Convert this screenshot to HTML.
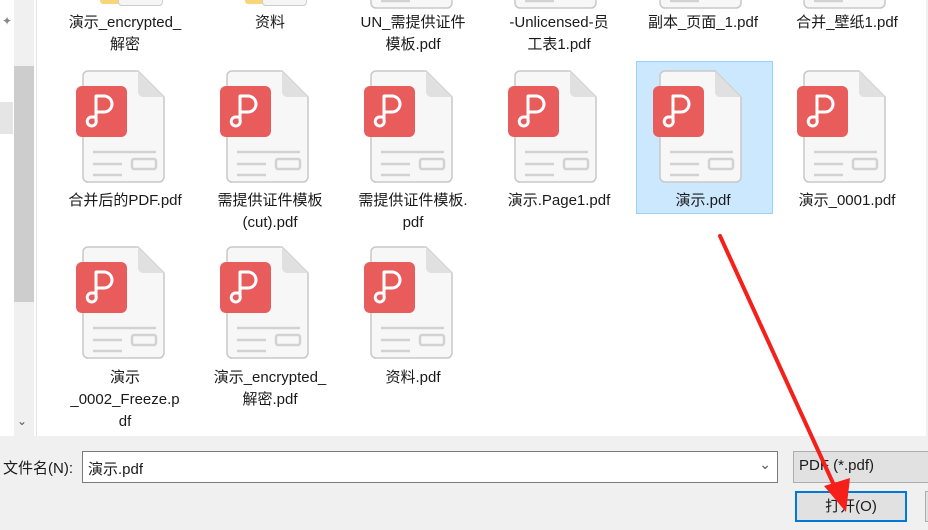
<!DOCTYPE html>
<html><head><meta charset="utf-8"><style>
*{margin:0;padding:0;box-sizing:border-box}
body{width:928px;height:530px;overflow:hidden;background:#f0f0f0;font-family:"Liberation Sans","Noto Sans CJK SC",sans-serif;font-size:15px;color:#1a1a1a;position:relative}
.area{position:absolute;left:36px;top:0;width:890px;height:436px;background:#fff;border-left:1px solid #e5e5e5}
.side{position:absolute;left:0;top:0;width:36px;height:436px;background:#fff}
.track{position:absolute;left:14px;top:0;width:20px;height:436px;background:#f0f0f0}
.thumb{position:absolute;left:14px;top:66px;width:20px;height:236px;background:#cdcdcd}
.lbl{position:absolute;width:136px;text-align:center;line-height:22px;font-size:15px}
.ic{position:absolute;width:100px;height:120px}
.sel{position:absolute;left:636px;top:61px;width:137px;height:153px;background:#cce8ff;border:1px solid #99d1ff}
.inp{position:absolute;left:82px;top:451px;width:696px;height:32px;background:#fff;border:1px solid #7a7a7a}
.flt{position:absolute;left:793px;top:451px;width:140px;height:32px;background:#e1e1e1;border:1px solid #adadad}
.btn{position:absolute;left:795px;top:491px;width:112px;height:31px;background:#e1e1e1;border:2px solid #0078d7;text-align:center;line-height:27px}
.btn2{position:absolute;left:925px;top:491px;width:10px;height:31px;background:#e1e1e1;border:1px solid #adadad}
</style></head><body>
<svg width="0" height="0" style="position:absolute"><defs>
<g id="pdf">
<path d="M12 1 H62 L88 27 V107 a5 5 0 0 1 -5 5 H12 a5 5 0 0 1 -5 -5 V6 a5 5 0 0 1 5 -5z" fill="#f7f7f7" stroke="#c8c8c8" stroke-width="1.5"/>
<path d="M62 1 V22 a5 5 0 0 0 5 5 H88z" fill="#e0e0e0"/>
<line x1="17" y1="82" x2="80" y2="82" stroke="#d2d2d2" stroke-width="2.5"/>
<line x1="17" y1="94" x2="46" y2="94" stroke="#d2d2d2" stroke-width="2.5"/>
<rect x="56" y="89" width="24" height="10" rx="2" fill="none" stroke="#d2d2d2" stroke-width="2.5"/>
<line x1="17" y1="105" x2="46" y2="105" stroke="#d2d2d2" stroke-width="2.5"/>
<rect x="0" y="16" width="51" height="51" rx="6" fill="#e95c5c"/>
<path d="M20 26 H28 A8 8 0 0 1 28 42 H20 V50 A4.5 4.5 0 1 1 15 47 H20 M20 26 V43" fill="none" stroke="#fff" stroke-width="3" stroke-linecap="round" stroke-linejoin="round"/>
</g></defs></svg>
<div class="side"></div>
<div class="area"></div>
<div class="track"></div>
<div style="position:absolute;left:0;top:102px;width:13px;height:32px;background:#e5e5e5"></div>
<div class="thumb"></div>
<div style="position:absolute;left:2px;top:14px;color:#888;font-size:12px">✦</div>
<div style="position:absolute;left:17px;top:414px;color:#555;font-size:12px">&#8964;</div>
<div class="sel"></div>

<div style="position:absolute;left:100px;top:-6px;width:45px;height:10px;background:#f7d57a;border-radius:0 0 3px 3px"></div>
<div style="position:absolute;left:118px;top:-6px;width:45px;height:12px;background:#f5f5f5;border:1px solid #ccc;border-radius:0 0 4px 4px"></div>
<div style="position:absolute;left:245px;top:-6px;width:45px;height:10px;background:#f7d57a;border-radius:0 0 3px 3px"></div>
<div style="position:absolute;left:262px;top:-6px;width:45px;height:12px;background:#f5f5f5;border:1px solid #ccc;border-radius:0 0 4px 4px"></div>
<svg class="ic" style="left:364px;top:-104px"><use href="#pdf"/></svg>
<svg class="ic" style="left:508px;top:-104px"><use href="#pdf"/></svg>
<svg class="ic" style="left:653px;top:-104px"><use href="#pdf"/></svg>
<svg class="ic" style="left:797px;top:-104px"><use href="#pdf"/></svg>

<div class="lbl" style="left:57px;top:12px">演示_encrypted_<br>解密</div>
<div class="lbl" style="left:202px;top:12px">资料</div>
<div class="lbl" style="left:345px;top:12px">UN_需提供证件<br>模板.pdf</div>
<div class="lbl" style="left:491px;top:12px">-Unlicensed-员<br>工表1.pdf</div>
<div class="lbl" style="left:635px;top:12px">副本_页面_1.pdf</div>
<div class="lbl" style="left:779px;top:12px">合并_壁纸1.pdf</div>

<svg class="ic" style="left:76px;top:70px"><use href="#pdf"/></svg>
<svg class="ic" style="left:220px;top:70px"><use href="#pdf"/></svg>
<svg class="ic" style="left:364px;top:70px"><use href="#pdf"/></svg>
<svg class="ic" style="left:508px;top:70px"><use href="#pdf"/></svg>
<svg class="ic" style="left:653px;top:70px"><use href="#pdf"/></svg>
<svg class="ic" style="left:797px;top:70px"><use href="#pdf"/></svg>
<div class="lbl" style="left:57px;top:190px">合并后的PDF.pdf</div>
<div class="lbl" style="left:202px;top:190px">需提供证件模板<br>(cut).pdf</div>
<div class="lbl" style="left:345px;top:190px">需提供证件模板.<br>pdf</div>
<div class="lbl" style="left:491px;top:190px">演示.Page1.pdf</div>
<div class="lbl" style="left:635px;top:190px">演示.pdf</div>
<div class="lbl" style="left:779px;top:190px">演示_0001.pdf</div>

<svg class="ic" style="left:76px;top:246px"><use href="#pdf"/></svg>
<svg class="ic" style="left:220px;top:246px"><use href="#pdf"/></svg>
<svg class="ic" style="left:364px;top:246px"><use href="#pdf"/></svg>
<div class="lbl" style="left:57px;top:367px">演示<br>_0002_Freeze.p<br>df</div>
<div class="lbl" style="left:202px;top:367px">演示_encrypted_<br>解密.pdf</div>
<div class="lbl" style="left:345px;top:367px">资料.pdf</div>

<div style="position:absolute;left:3px;top:457px">文件名(N):</div>
<div class="inp"><span style="position:absolute;left:5px;top:6px">演示.pdf</span><span style="position:absolute;right:6px;top:4px;color:#555;font-size:14px">&#8964;</span></div>
<div class="flt"><span style="position:absolute;left:5px;top:5px">PDF (*.pdf)</span></div>
<div class="btn">打开(O)</div>
<div class="btn2"></div>

<svg style="position:absolute;left:0;top:0" width="928" height="530">
<line x1="720" y1="236" x2="838" y2="494" stroke="#f5201a" stroke-width="4" stroke-linecap="round"/>
<polygon points="846,512 824,486 850,478" fill="#f5201a"/>
</svg>
</body></html>
